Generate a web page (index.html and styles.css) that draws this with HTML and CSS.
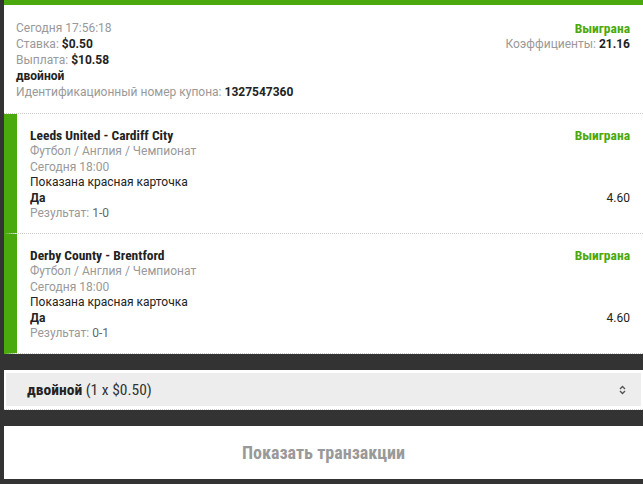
FILE: index.html
```html
<!DOCTYPE html>
<html>
    <head>
        <meta charset="UTF-8">
        <title>Купон</title>
        <link rel="stylesheet" href="styles.css">
    </head>
    <body>
        <div class="page">
            <div class="coupon">
                <div class="coupon-head">
                    <div class="head-left">
                        <div class="muted">Сегодня 17:56:18</div>
                        <div><span class="muted">Ставка:</span> <b>$0.50</b></div>
                        <div><span class="muted">Выплата:</span> <b>$10.58</b></div>
                        <div><b>двойной</b></div>
                        <div><span class="muted">Идентификационный номер купона:</span> <b>1327547360</b></div>
                    </div>
                    <div class="head-right">
                        <div class="status">Выиграна</div>
                        <div><span class="muted">Коэффициенты:</span> <b>21.16</b></div>
                    </div>
                </div>

                <div class="selection">
                    <div class="sel-top">
                        <div class="match">Leeds United - Cardiff City</div>
                        <div class="status">Выиграна</div>
                    </div>
                    <div class="muted">Футбол / Англия / Чемпионат</div>
                    <div class="muted">Сегодня 18:00</div>
                    <div>Показана красная карточка</div>
                    <div class="sel-pick">
                        <b>Да</b>
                        <span>4.60</span>
                    </div>
                    <div><span class="muted">Результат:</span> <span class="score">1-0</span></div>
                </div>

                <div class="selection">
                    <div class="sel-top">
                        <div class="match">Derby County - Brentford</div>
                        <div class="status">Выиграна</div>
                    </div>
                    <div class="muted">Футбол / Англия / Чемпионат</div>
                    <div class="muted">Сегодня 18:00</div>
                    <div>Показана красная карточка</div>
                    <div class="sel-pick">
                        <b>Да</b>
                        <span>4.60</span>
                    </div>
                    <div><span class="muted">Результат:</span> <span class="score">0-1</span></div>
                </div>
            </div>

            <div class="systems">
                <div class="systems-box">
                    <span><b>двойной</b> (1 x $0.50)</span>
                    <svg class="updown" width="7" height="10" viewBox="0 0 7 10">
                        <path d="M1 4 L3.5 1.5 L6 4 M1 6 L3.5 8.5 L6 6" fill="none" stroke="#555" stroke-width="1.4"/>
                    </svg>
                </div>
            </div>

            <div class="transactions">Показать транзакции</div>
        </div>
    </body>
</html>
```

FILE: styles.css
```css
body {
    margin: 0;
    background-color: #333;
    font-family: Roboto, "Liberation Sans", sans-serif;
    font-size: 12px;
    line-height: 16px;
    color: #222;
}
.page {
    padding: 0 0 5px 4px;
}
.coupon {
    background-color: #fff;
    border-top: 5px solid #4aa90c;
}
.muted {
    color: #999;
}
b {
    color: #222;
}
.coupon-head {
    display: flex;
    justify-content: space-between;
    padding: 15px 13px 13px 12px;
    border-bottom: 1px dotted #ccc;
}
.head-right {
    text-align: right;
}
.status {
    color: #4aa90c;
    font-weight: bold;
    font-family: "Roboto Condensed", "Liberation Sans Narrow", Roboto, sans-serif;
    font-size: 13.5px;
}
.selection {
    border-left: 13px solid #4aa90c;
    border-bottom: 1px dotted #ccc;
    padding: 13px 13px 11.5px 13px;
    line-height: 15.5px;
}
.sel-top {
    display: flex;
    justify-content: space-between;
    line-height: 17px;
}
.match {
    font-weight: bold;
    font-family: "Roboto Condensed", "Liberation Sans Narrow", Roboto, sans-serif;
    font-size: 13.5px;
}
.sel-pick {
    display: flex;
    justify-content: space-between;
}
.score {
    color: #666;
}
.systems {
    margin-top: 16px;
    background-color: #fff;
    padding: 3px 2px;
    border-bottom: 1px dotted #ccc;
}
.systems-box {
    background-color: #ededed;
    height: 33px;
    display: flex;
    align-items: center;
    justify-content: space-between;
    padding: 0 15px 0 21px;
    font-family: "Roboto Condensed", "Liberation Sans Narrow", Roboto, sans-serif;
    font-size: 15.5px;
    color: #333;
}
.transactions {
    margin-top: 16px;
    background-color: #fff;
    height: 53px;
    display: flex;
    align-items: center;
    justify-content: center;
    font-family: "Roboto Condensed", "Liberation Sans Narrow", Roboto, sans-serif;
    font-weight: bold;
    font-size: 18px;
    color: #999;
}
```
